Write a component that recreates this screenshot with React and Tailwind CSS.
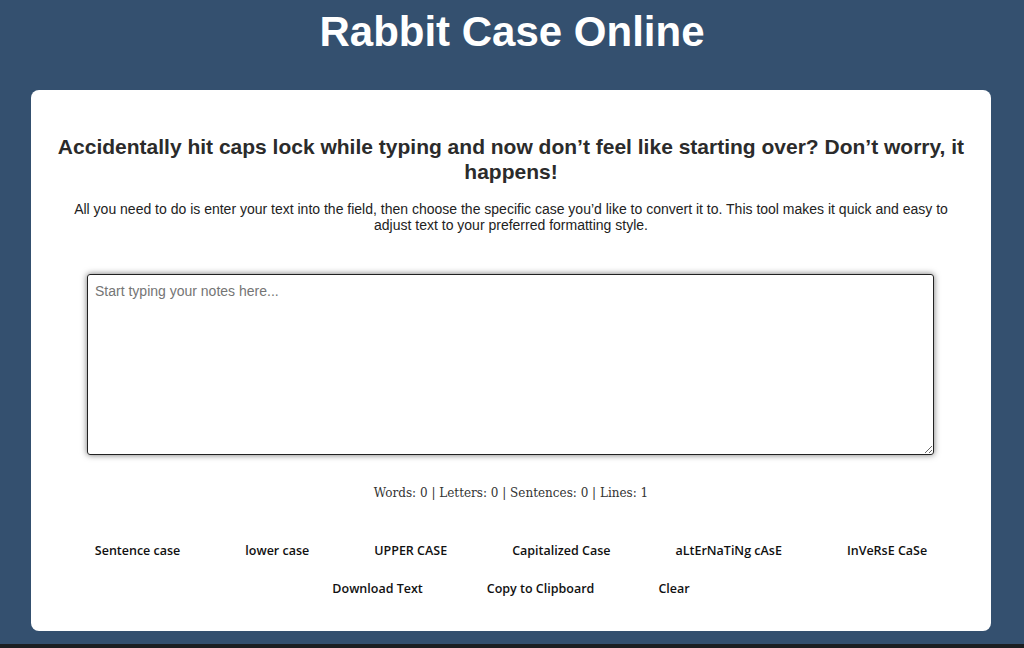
import { useState } from "react";

const CASE_BUTTONS = [
  "Sentence case",
  "lower case",
  "UPPER CASE",
  "Capitalized Case",
  "aLtErNaTiNg cAsE",
  "InVeRsE CaSe",
];

const ACTION_BUTTONS = ["Download Text", "Copy to Clipboard", "Clear"];

function CaseButton({ label }) {
  return (
    <button
      type="button"
      className="bg-transparent text-[12.5px] font-semibold leading-[18px] text-[#111] [font-family:'Open_Sans','Noto_Sans',sans-serif]"
    >
      {label}
    </button>
  );
}

export default function App() {
  const [text, setText] = useState("");

  return (
    <div className="flex h-[648px] w-full flex-col overflow-hidden bg-[#34506f] [font-family:'Liberation_Sans',Arial,sans-serif]">
      <h1 className="pt-[9px] text-center text-[42px] font-bold leading-[46px] text-white">
        Rabbit Case Online
      </h1>

      <main className="ml-[31px] mr-[33px] mt-[35px] h-[541px] rounded-lg bg-white px-[20px] pt-[44px]">
        <h2 className="text-center text-[21px] font-bold leading-[25px] text-[#2b2b2b]">
          Accidentally hit caps lock while typing and now don’t feel like starting over? Don’t
          worry, it happens!
        </h2>
        <p className="mx-auto mt-[17px] max-w-[880px] text-center text-[14px] leading-[16px] text-[#222]">
          All you need to do is enter your text into the field, then choose the specific case
          you’d like to convert it to. This tool makes it quick and easy to adjust text to your
          preferred formatting style.
        </p>

        <div className="mt-[41px] pl-[36px] pr-[37px]">
          <textarea
            value={text}
            onChange={(e) => setText(e.target.value)}
            placeholder="Start typing your notes here..."
            className="block h-[181px] w-full resize-y rounded-[3px] border border-[#222] px-[7px] py-[8px] text-[14px] leading-[16px] text-[#222] shadow-[0_0_6px_rgba(0,0,0,0.55)] outline-none placeholder:text-[#757575]"
          />
        </div>

        <p className="mt-[30px] text-center text-[12px] leading-[16px] text-[#333] [font-family:Georgia,'DejaVu_Serif',serif]">
          Words: 0 | Letters: 0 | Sentences: 0 | Lines: 1
        </p>

        <div className="mt-[41px] flex justify-center gap-x-[65px]">
          {CASE_BUTTONS.map((b) => (
            <CaseButton key={b} label={b} />
          ))}
        </div>
        <div className="mt-[20px] flex justify-center gap-x-[64px]">
          {ACTION_BUTTONS.map((b) => (
            <CaseButton key={b} label={b} />
          ))}
        </div>
      </main>

      <div className="mt-auto h-[4px] bg-[#1c1f22]" />
    </div>
  );
}
